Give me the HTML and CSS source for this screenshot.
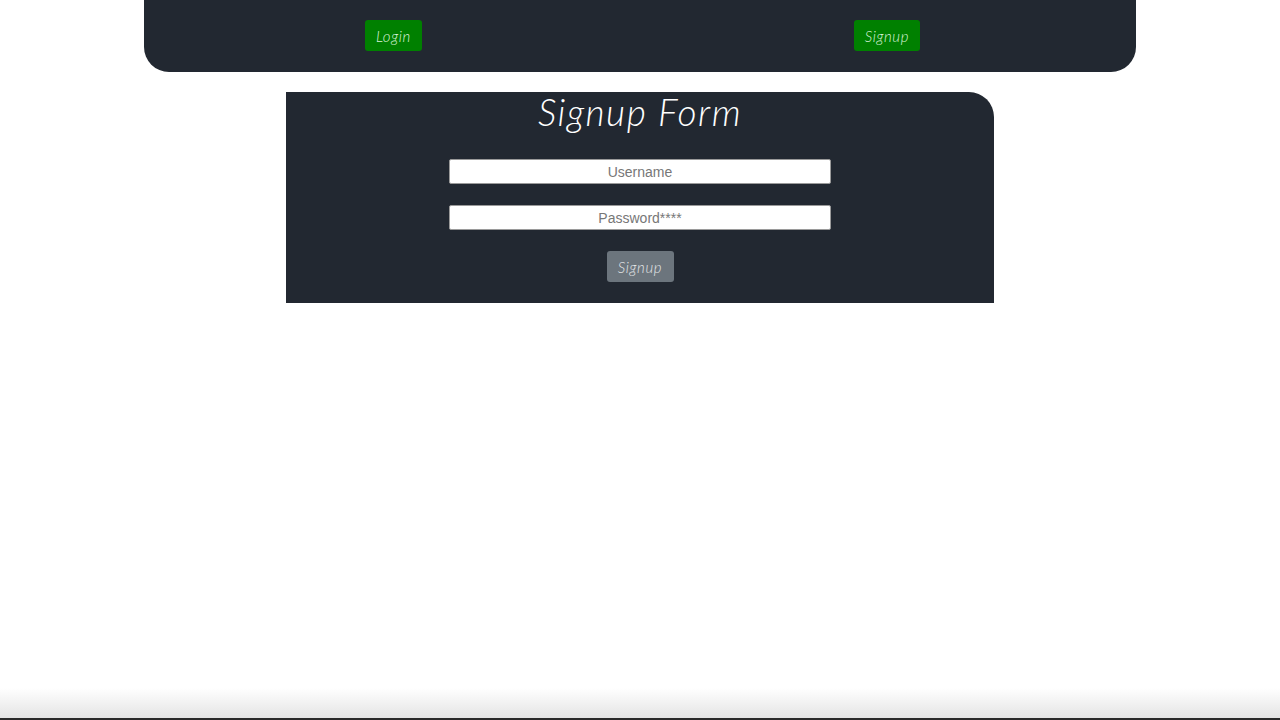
FILE: index.html
```html
<!DOCTYPE html>
<html lang="en">
<head>
<meta charset="utf-8">
<title>Signup</title>
<link rel="stylesheet" href="styles.css">
</head>
<body>
<header class="topbar">
  <button class="btn btn-green">Login</button>
  <button class="btn btn-green">Signup</button>
</header>
<main class="form-card">
  <h1 class="form-title">Signup Form</h1>
  <form class="form-body">
    <input class="field" type="text" placeholder="Username">
    <input class="field" type="password" placeholder="Password****">
    <button type="button" class="btn btn-gray">Signup</button>
  </form>
</main>
</body>
</html>
```
FILE: styles.css
```css
html {
  height: 720px;
  background: linear-gradient(to bottom, #ffffff 0, #ffffff 688px, #e4e4e4 718px, #2a2a2a 718px, #2a2a2a 720px);
}
body {
  margin: 0;
  font-family: "Lato", "Open Sans", sans-serif;
}
.topbar {
  width: 992px;
  margin: 0 auto;
  box-sizing: border-box;
  height: 72px;
  padding: 20px 0 20px 5px;
  background: #222831;
  border-radius: 0 0 25px 25px;
  display: flex;
  justify-content: space-around;
  align-items: flex-start;
}
.btn {
  font-family: "Lato", sans-serif;
  font-style: italic;
  font-weight: 300;
  font-size: 15px;
  height: 31px;
  padding: 0 11px;
  border: none;
  border-radius: 3px;
  letter-spacing: 0.6px;
}
.btn-green {
  background: #008000;
  color: #d9f2d9;
}
.btn-gray {
  background: #6c757d;
  color: #e3e5e7;
  width: 67px;
  padding: 0;
}
.form-card {
  width: 708px;
  margin: 20px auto 0;
  background: #222831;
  border-radius: 0 25px 0 0;
  padding-bottom: 21px;
  display: flex;
  flex-direction: column;
  align-items: center;
}
.form-title {
  margin: 0;
  font-family: "Lato", sans-serif;
  font-style: italic;
  font-weight: 300;
  font-size: 37px;
  letter-spacing: 1.5px;
  color: #ffffff;
  line-height: 40px;
  height: 46px;
}
.form-body {
  margin-top: 21px;
  display: flex;
  flex-direction: column;
  align-items: center;
  gap: 21px;
}
.field {
  width: 382px;
  height: 25px;
  box-sizing: border-box;
  border: 1px solid #9a9a9a;
  border-radius: 2px;
  background: #fff;
  text-align: center;
  font-family: "Liberation Sans", Arial, sans-serif;
  font-size: 14px;
  padding: 0;
}
.field::placeholder {
  color: #777;
}
```
